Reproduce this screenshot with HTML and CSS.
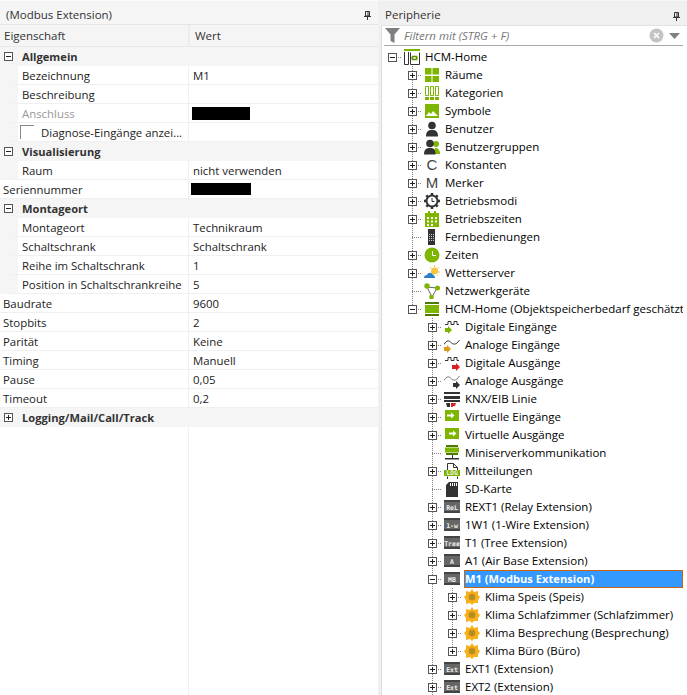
FILE: index.html
```html
<!DOCTYPE html>
<html lang="de">
<head>
<meta charset="utf-8">
<title>Modbus Extension</title>
<link rel="stylesheet" href="styles.css">
</head>
<body>
<svg class="defs" aria-hidden="true">
  <symbol id="i-root" viewBox="0 0 16 16"><rect x="0" y="0" width="16" height="2" fill="#7db500"/><path d="M.5 3v12.500h4V3M6.500 3.500v12h9v-12" fill="none" stroke="#333"/><rect x="8.500" y="7.500" width="4" height="3" fill="none" stroke="#5f9000" stroke-width="1.500"/><path d="M7 9h1M13 9h1" stroke="#5f9000"/></symbol>
  <symbol id="i-rooms" viewBox="0 0 16 16"><path d="M1 1h6.500v6.500H1zM8.500 1H15v6.500H8.500zM1 9h6.500v6H1zM8.500 9H15v6H8.500z" fill="#7db500"/></symbol>
  <symbol id="i-cat" viewBox="0 0 16 16"><path d="M1.500 1.500h3v9h-3zM6.500 1.500h3v9h-3zM11.500 1.500h3v9h-3z" fill="none" stroke="#7db500"/><path d="M1 12h4v3H1zM6 12h4v3H6zM11 12h4v3h-4z" fill="#7db500"/></symbol>
  <symbol id="i-sym" viewBox="0 0 16 16"><rect x="1" y="1" width="14" height="14" fill="#7db500"/><path d="M2 13l3-4 2 2 2-3 3 3 2 2z" fill="#fff"/></symbol>
  <symbol id="i-user" viewBox="0 0 16 16"><circle cx="8" cy="4.500" r="3.800" fill="#333"/><path d="M2 15.500c0-5 2-6.500 6-6.500s6 1.500 6 6.500z" fill="#333"/></symbol>
  <symbol id="i-group" viewBox="0 0 16 16"><circle cx="12" cy="5" r="3" fill="#7db500"/><path d="M9 15c1-5 2-6 3-6s4 1 4 6z" fill="#7db500"/><circle cx="6" cy="4.500" r="3.800" fill="#333"/><path d="M0 15.500c0-5 2-6.500 6-6.500s5.500 1.500 5.500 6.500z" fill="#333"/></symbol>
  <symbol id="i-gear" viewBox="0 0 16 16"><circle cx="8" cy="8" r="5.500" fill="none" stroke="#333" stroke-width="2"/><path d="M8 0v3M8 13v3M0 8h3M13 8h3M2.300 2.300l2 2M11.700 11.700l2 2M13.700 2.300l-2 2M4.300 11.700l-2 2" stroke="#333" stroke-width="2.500"/><path d="M8 5v3.500h2.500" fill="none" stroke="#333"/></symbol>
  <symbol id="i-cal" viewBox="0 0 16 16"><path d="M1 2h14v14H1z" fill="#7db500"/><path d="M4 0h2v3H4zM10 0h2v3h-2z" fill="#7db500"/><path d="M3 6h2v2H3zM7 6h2v2H7zM11 6h2v2h-2zM3 9.500h2v2H3zM7 9.500h2v2H7zM11 9.500h2v2h-2zM3 13h2v2H3zM7 13h2v2H7z" fill="#fff"/></symbol>
  <symbol id="i-remote" viewBox="0 0 16 16"><rect x="4" y="0" width="7" height="16" fill="#333"/><path d="M5 5h1v1H5zM7 5h1v1H7zM9 5h1v1H9zM5 7h1v1H5zM7 7h1v1H7zM9 7h1v1H9zM5 9h1v1H5zM7 9h1v1H7zM9 9h1v1H9zM5 11h1v1H5zM7 11h1v1H7zM9 11h1v1H9z" fill="#ccc"/></symbol>
  <symbol id="i-clock" viewBox="0 0 16 16"><circle cx="8" cy="8" r="7.500" fill="#7db500"/><path d="M8.500 4v4.500H12" fill="none" stroke="#fff"/></symbol>
  <symbol id="i-weather" viewBox="0 0 16 16"><circle cx="10.500" cy="6" r="3.500" fill="#f5c542"/><path d="M10.500 0v2M15 2l-1.500 1.500M16 7h-2M14 11l-1-1M6 2l1.500 1.500" stroke="#f5c542"/><path d="M0 13c0-2 1-3 3-3 1-3 5-3 6 0 1 0 2 1 2 3z" fill="#2a7fc8"/></symbol>
  <symbol id="i-net" viewBox="0 0 16 16"><path d="M3 4l10 1-5 9z" fill="none" stroke="#666"/><circle cx="3" cy="3" r="2.700" fill="#7db500"/><circle cx="13.500" cy="5" r="2.500" fill="#7db500"/><circle cx="7.500" cy="14" r="2.300" fill="#7db500"/></symbol>
  <symbol id="i-server" viewBox="0 0 16 16"><path d="M1 1h14v2H1z" fill="#4f7a00"/><path d="M1 4h14v8H1z" fill="#7db500"/><path d="M1 13h14v2H1z" fill="#4f7a00"/></symbol>
  <symbol id="i-di" viewBox="0 0 16 16"><path d="M1 5.500h3v-3h3v3h3v-3h3v3h2" fill="none" stroke="#333"/><path d="M1 9h3V7l4 4-4 4v-2H1z" fill="#7db500"/></symbol>
  <symbol id="i-ai" viewBox="0 0 16 16"><path d="M0 7.500C3 2.500 5 3.500 7 5.500s5 3 8.500-2.500" fill="none" stroke="#333"/><path d="M0 10h3V8l4 4-4 4v-2H0z" fill="#e09a1a"/></symbol>
  <symbol id="i-do" viewBox="0 0 16 16"><path d="M1 5.500h3v-3h3v3h3v-3h3v3h2" fill="none" stroke="#333"/><path d="M8 10h4V8l4 4-4 4v-2H8z" fill="#e02020"/></symbol>
  <symbol id="i-ao" viewBox="0 0 16 16"><path d="M0 7.500C3 2.500 5 3.500 7 5.500s5 3 8.500-2.500" fill="none" stroke="#777"/><path d="M9 10h3V8l4 4-4 4v-2H9z" fill="#333"/></symbol>
  <symbol id="i-knx" viewBox="0 0 16 16"><path d="M0 1h16v2H0zM0 5h16v3H0zM0 9h16v2H0z" fill="#333"/><path d="M2 12h4v4H3z" fill="#333"/><path d="M7 12h5l-1 3H9l-.500 2H7z" fill="#e02020"/></symbol>
  <symbol id="i-vi" viewBox="0 0 16 16"><rect x="1" y="1" width="14" height="11" fill="#7db500"/><path d="M3 5.500h4V3.500l3.500 3-3.500 3v-2H3z" fill="#fff"/></symbol>
  <symbol id="i-vo" viewBox="0 0 16 16"><rect x="1" y="1" width="14" height="11" fill="#7db500"/><path d="M5 5.500h4V3.500l3.500 3-3.500 3v-2H5z" fill="#fff"/></symbol>
  <symbol id="i-mini" viewBox="0 0 16 16"><path d="M2 0h12v2H2z" fill="#4f7a00"/><path d="M1 2.500h14v5H1z" fill="#7db500"/><path d="M2 8h12v2H2z" fill="#4f7a00"/><path d="M8 10h1v3H8zM1 13h14v1.500H1z" fill="#333"/></symbol>
  <symbol id="i-log" viewBox="0 0 16 16"><path d="M3.500.5h6l4 4v3M3.500.5v7M3.500 13.500v3h10v-3M9.500.5v4h4" fill="none" stroke="#333"/><rect x="0" y="7" width="16" height="6" fill="#7db500"/></symbol>
  <symbol id="i-sd" viewBox="0 0 16 16"><path d="M5 1h9v15H2V4z" fill="#333"/><path d="M6 2h1v3H6zM8 2h1v3H8zM10 2h1v3h-1zM12 2h1v3h-1z" fill="#fff"/></symbol>
  <symbol id="i-mod" viewBox="0 0 16 16"><path d="M0 1h16v2H0zM0 12h16v2H0z" fill="#444"/><rect x="0" y="3" width="16" height="9" fill="#666"/></symbol>
  <symbol id="i-klima" viewBox="0 0 16 16"><path d="M8 0l2 3 4-1 0 4 2 2-2 3 0 3-4 0-2 2-2-2-4 1 0-4-2-3 2-2 0-4 4 1z" fill="#f7b21b"/><circle cx="8" cy="8" r="3.500" fill="#d08a1e"/><path d="M6 6l4 4M10 6l-4 4" stroke="#7d9a20"/></symbol>
  <symbol id="i-pin" viewBox="0 0 9 9"><path d="M2.500.5h4v4.500h-4zM5 1v4M1 5.500h7M4.500 6v3" fill="none" stroke="#333"/></symbol>
</svg>

<main class="app">
  <section class="props">
    <header class="title"><span>(Modbus Extension)</span><svg class="pin"><use href="#i-pin"/></svg></header>
    <div class="phead"><span class="ph1">Eigenschaft</span><span class="ph2">Wert</span></div>

    <div class="grp"><span class="box minus"></span><b>Allgemein</b></div>
    <div class="row sub"><span class="n">Bezeichnung</span><span class="v">M1</span></div>
    <div class="row sub"><span class="n">Beschreibung</span><span class="v"></span></div>
    <div class="row sub"><span class="n off">Anschluss</span><span class="v"><i class="red r1"></i></span></div>
    <div class="row sub"><span class="n chk"><i class="cb"></i>Diagnose-Eingänge anzei...</span><span class="v"></span></div>
    <div class="grp"><span class="box minus"></span><b>Visualisierung</b></div>
    <div class="row sub"><span class="n">Raum</span><span class="v">nicht verwenden</span></div>
    <div class="row"><span class="n">Seriennummer</span><span class="v"><i class="red r2"></i></span></div>
    <div class="grp"><span class="box minus"></span><b>Montageort</b></div>
    <div class="row sub"><span class="n">Montageort</span><span class="v">Technikraum</span></div>
    <div class="row sub"><span class="n">Schaltschrank</span><span class="v">Schaltschrank</span></div>
    <div class="row sub"><span class="n">Reihe im Schaltschrank</span><span class="v">1</span></div>
    <div class="row sub"><span class="n">Position in Schaltschrankreihe</span><span class="v">5</span></div>
    <div class="row"><span class="n">Baudrate</span><span class="v">9600</span></div>
    <div class="row"><span class="n">Stopbits</span><span class="v">2</span></div>
    <div class="row"><span class="n">Parität</span><span class="v">Keine</span></div>
    <div class="row"><span class="n">Timing</span><span class="v">Manuell</span></div>
    <div class="row"><span class="n">Pause</span><span class="v">0,05</span></div>
    <div class="row"><span class="n">Timeout</span><span class="v">0,2</span></div>
    <div class="grp"><span class="box plus"></span><b>Logging/Mail/Call/Track</b></div>
    <div class="fill"></div>
  </section>

  <section class="peri">
    <header class="title"><span>Peripherie</span><svg class="pin"><use href="#i-pin"/></svg></header>
    <div class="body">
      <div class="filter">
        <svg class="funnel" viewBox="0 0 15 15"><path d="M0 0h15L9.500 6.500V15l-4-2V6.500z" fill="#808080"/></svg>
        <span class="ph">Filtern mit (STRG + F)</span>
        <svg class="clear" viewBox="0 0 15 15"><circle cx="7.500" cy="7.500" r="7" fill="#c4c4c4"/><path d="M5 5l5 5M10 5l-5 5" stroke="#fff" stroke-width="1.500"/></svg>
        <svg class="drop" viewBox="0 0 11 6"><path d="M0 0h11L5.500 6z" fill="#808080"/></svg>
      </div>
      <div class="tree">
        <div class="tr"><span class="c root"><span class="box minus"></span></span><svg class="ic"><use href="#i-root"/></svg><span class="lb">HCM-Home</span></div>

        <div class="tr"><span class="sp"></span><span class="c v"><span class="box plus"></span></span><svg class="ic"><use href="#i-rooms"/></svg><span class="lb">Räume</span></div>
        <div class="tr"><span class="sp"></span><span class="c v"><span class="box plus"></span></span><svg class="ic"><use href="#i-cat"/></svg><span class="lb">Kategorien</span></div>
        <div class="tr"><span class="sp"></span><span class="c v"><span class="box plus"></span></span><svg class="ic"><use href="#i-sym"/></svg><span class="lb">Symbole</span></div>
        <div class="tr"><span class="sp"></span><span class="c v"><span class="box plus"></span></span><svg class="ic"><use href="#i-user"/></svg><span class="lb">Benutzer</span></div>
        <div class="tr"><span class="sp"></span><span class="c v"><span class="box plus"></span></span><svg class="ic"><use href="#i-group"/></svg><span class="lb">Benutzergruppen</span></div>
        <div class="tr"><span class="sp"></span><span class="c v"><span class="box plus"></span></span><span class="ic gl">C</span><span class="lb">Konstanten</span></div>
        <div class="tr"><span class="sp"></span><span class="c v"><span class="box plus"></span></span><span class="ic gl">M</span><span class="lb">Merker</span></div>
        <div class="tr"><span class="sp"></span><span class="c v"><span class="box plus"></span></span><svg class="ic"><use href="#i-gear"/></svg><span class="lb">Betriebsmodi</span></div>
        <div class="tr"><span class="sp"></span><span class="c v"><span class="box plus"></span></span><svg class="ic"><use href="#i-cal"/></svg><span class="lb">Betriebszeiten</span></div>
        <div class="tr"><span class="sp"></span><span class="c v"></span><svg class="ic"><use href="#i-remote"/></svg><span class="lb">Fernbedienungen</span></div>
        <div class="tr"><span class="sp"></span><span class="c v"><span class="box plus"></span></span><svg class="ic"><use href="#i-clock"/></svg><span class="lb">Zeiten</span></div>
        <div class="tr"><span class="sp"></span><span class="c v"><span class="box plus"></span></span><svg class="ic"><use href="#i-weather"/></svg><span class="lb">Wetterserver</span></div>
        <div class="tr"><span class="sp"></span><span class="c v"></span><svg class="ic"><use href="#i-net"/></svg><span class="lb">Netzwerkgeräte</span></div>
        <div class="tr"><span class="sp"></span><span class="c last"><span class="box minus"></span></span><svg class="ic"><use href="#i-server"/></svg><span class="lb">HCM-Home (Objektspeicherbedarf geschätzt</span></div>

        <div class="tr"><span class="sp"></span><span class="sp"></span><span class="c v"><span class="box plus"></span></span><svg class="ic"><use href="#i-di"/></svg><span class="lb">Digitale Eingänge</span></div>
        <div class="tr"><span class="sp"></span><span class="sp"></span><span class="c v"><span class="box plus"></span></span><svg class="ic"><use href="#i-ai"/></svg><span class="lb">Analoge Eingänge</span></div>
        <div class="tr"><span class="sp"></span><span class="sp"></span><span class="c v"><span class="box plus"></span></span><svg class="ic"><use href="#i-do"/></svg><span class="lb">Digitale Ausgänge</span></div>
        <div class="tr"><span class="sp"></span><span class="sp"></span><span class="c v"><span class="box plus"></span></span><svg class="ic"><use href="#i-ao"/></svg><span class="lb">Analoge Ausgänge</span></div>
        <div class="tr"><span class="sp"></span><span class="sp"></span><span class="c v"><span class="box plus"></span></span><svg class="ic"><use href="#i-knx"/></svg><span class="lb">KNX/EIB Linie</span></div>
        <div class="tr"><span class="sp"></span><span class="sp"></span><span class="c v"><span class="box plus"></span></span><svg class="ic"><use href="#i-vi"/></svg><span class="lb">Virtuelle Eingänge</span></div>
        <div class="tr"><span class="sp"></span><span class="sp"></span><span class="c v"><span class="box plus"></span></span><svg class="ic"><use href="#i-vo"/></svg><span class="lb">Virtuelle Ausgänge</span></div>
        <div class="tr"><span class="sp"></span><span class="sp"></span><span class="c v"></span><svg class="ic"><use href="#i-mini"/></svg><span class="lb">Miniserverkommunikation</span></div>
        <div class="tr"><span class="sp"></span><span class="sp"></span><span class="c v"><span class="box plus"></span></span><svg class="ic" viewBox="0 0 16 16"><use href="#i-log" width="16" height="16"/><text x="8" y="12" class="ti">LOG</text></svg><span class="lb">Mitteilungen</span></div>
        <div class="tr"><span class="sp"></span><span class="sp"></span><span class="c v"></span><svg class="ic"><use href="#i-sd"/></svg><span class="lb">SD-Karte</span></div>
        <div class="tr"><span class="sp"></span><span class="sp"></span><span class="c v"><span class="box plus"></span></span><svg class="ic" viewBox="0 0 16 16"><use href="#i-mod" width="16" height="16"/><text x="8" y="10.500" class="ti">ReL</text></svg><span class="lb">REXT1 (Relay Extension)</span></div>
        <div class="tr"><span class="sp"></span><span class="sp"></span><span class="c v"><span class="box plus"></span></span><svg class="ic" viewBox="0 0 16 16"><use href="#i-mod" width="16" height="16"/><text x="8" y="10.500" class="ti">1-w</text></svg><span class="lb">1W1 (1-Wire Extension)</span></div>
        <div class="tr"><span class="sp"></span><span class="sp"></span><span class="c v"><span class="box plus"></span></span><svg class="ic" viewBox="0 0 16 16"><use href="#i-mod" width="16" height="16"/><text x="8" y="10.500" class="ti">Tree</text></svg><span class="lb">T1 (Tree Extension)</span></div>
        <div class="tr"><span class="sp"></span><span class="sp"></span><span class="c v"><span class="box plus"></span></span><svg class="ic" viewBox="0 0 16 16"><use href="#i-mod" width="16" height="16"/><text x="8" y="10.500" class="ti">A</text></svg><span class="lb">A1 (Air Base Extension)</span></div>
        <div class="tr"><span class="sp"></span><span class="sp"></span><span class="c v"><span class="box minus"></span></span><svg class="ic" viewBox="0 0 16 16"><use href="#i-mod" width="16" height="16"/><text x="8" y="10.500" class="ti">MB</text></svg><span class="lb sel">M1 (Modbus Extension)</span></div>

        <div class="tr"><span class="sp"></span><span class="sp"></span><span class="g"></span><span class="c v"><span class="box plus"></span></span><svg class="ic"><use href="#i-klima"/></svg><span class="lb">Klima Speis (Speis)</span></div>
        <div class="tr"><span class="sp"></span><span class="sp"></span><span class="g"></span><span class="c v"><span class="box plus"></span></span><svg class="ic"><use href="#i-klima"/></svg><span class="lb">Klima Schlafzimmer (Schlafzimmer)</span></div>
        <div class="tr"><span class="sp"></span><span class="sp"></span><span class="g"></span><span class="c v"><span class="box plus"></span></span><svg class="ic"><use href="#i-klima"/></svg><span class="lb">Klima Besprechung (Besprechung)</span></div>
        <div class="tr"><span class="sp"></span><span class="sp"></span><span class="g"></span><span class="c last"><span class="box plus"></span></span><svg class="ic"><use href="#i-klima"/></svg><span class="lb">Klima Büro (Büro)</span></div>

        <div class="tr"><span class="sp"></span><span class="sp"></span><span class="c v"><span class="box plus"></span></span><svg class="ic" viewBox="0 0 16 16"><use href="#i-mod" width="16" height="16"/><text x="8" y="10.500" class="ti">Ext</text></svg><span class="lb">EXT1 (Extension)</span></div>
        <div class="tr"><span class="sp"></span><span class="sp"></span><span class="c v"><span class="box plus"></span></span><svg class="ic" viewBox="0 0 16 16"><use href="#i-mod" width="16" height="16"/><text x="8" y="10.500" class="ti">Ext</text></svg><span class="lb">EXT2 (Extension)</span></div>
      </div>
    </div>
  </section>
</main>
</body>
</html>
```

FILE: styles.css
```css
* { box-sizing: border-box; }
html, body { margin: 0; height: 695px; overflow: hidden; }
body {
  background: #f0f0f0;
  color: #000;
  font-family: "Open Sans", "Noto Sans", sans-serif;
  font-size: 11.5px;
}
.defs { position: absolute; width: 0; height: 0; }
.ti { font: 700 6.5px "DejaVu Sans Mono", monospace; fill: #eee; text-anchor: middle; }

.app { display: flex; height: 695px; }

.title {
  height: 25px;
  display: flex;
  align-items: center;
  justify-content: space-between;
  padding: 5px 6px 0 6px;
  background: #f5f5f5;
  border-top: 1px solid #fbfbfb;
  color: #333;
  line-height: 18px;
  flex: none;
}
.pin { width: 9px; height: 9px; flex: none; margin-top: 0; }

.props { width: 378px; display: flex; flex-direction: column; background: #fff; flex: none; }
.props .title { border-bottom: 1px solid #e4e4e4; }
.phead {
  height: 22px;
  display: grid;
  grid-template-columns: 190px 1fr;
  align-items: center;
  background: #f5f5f5;
  border-bottom: 1px solid #e8e8e8;
  color: #333;
  flex: none;
}
.ph1 { padding-left: 4px; height: 100%; line-height: 21px; border-right: 2px solid #ececec; }
.ph2 { padding-left: 5px; }

.grp {
  height: 19px;
  display: flex;
  align-items: center;
  background: #f5f5f5;
  padding-left: 4px;
  flex: none;
  color: #333;
}
.grp b { margin-left: 9px; font-weight: 700; font-size: 11.15px; }

.row {
  height: 19px;
  display: grid;
  grid-template-columns: 189px 1fr;
  background: #fff;
  border-bottom: 1px solid #f0f0f0;
  line-height: 18px;
  flex: none;
  color: #222;
  font-size: 11.4px;
}
.row.sub { border-left: 18px solid #f5f5f5; grid-template-columns: 171px 1fr; }
.n { padding: 1px 0 0 3px; border-right: 1px solid #f0f0f0; white-space: nowrap; overflow: hidden; }
.row.sub .n { padding-left: 4px; }
.v { padding: 1px 0 0 4px; }
.off { color: #999; }
.chk { position: relative; padding-left: 23px !important; }
.cb { position: absolute; left: 2px; top: 2px; width: 14px; height: 14px; border-left: 1px solid #888; border-top: 1px solid #888; }
.red { display: block; background: #000; margin-top: 2px; }
.r1 { width: 58px; height: 13px; margin-left: -1px; }
.r2 { width: 60px; height: 12px; margin-left: -2px; }
.fill {
  flex: 1;
  background: linear-gradient(#f0f0f0, #f0f0f0) 188px 0 / 1px 100% no-repeat #fff;
}

.peri { flex: 1; min-width: 0; margin-left: 3px; display: flex; flex-direction: column; }
.peri .title { padding: 4px 6px 0 4px; background: #f0f0f0; border-top-color: #f7f7f7; }
.peri .pin { margin-top: 2px; }
.body { flex: 1; background: #fff; border-left: 1px solid #dcdcdc; border-top: 1px solid #e4e4e4; padding-right: 4px; display: flex; flex-direction: column; min-height: 0; }
.filter {
  height: 20px;
  margin: 0 0 0 2px;
  padding-left: 1px;
  flex: none;
  display: flex;
  align-items: center;
  border-bottom: 1px solid #a8a8a8;
}
.funnel { width: 15px; height: 15px; flex: none; }
.ph { font-style: italic; color: #777; margin-left: 4px; flex: 1; }
.clear { width: 15px; height: 15px; flex: none; }
.drop { width: 11px; height: 6px; margin: 0 3px 0 5px; flex: none; }

.tree { flex: 1; overflow: hidden; padding-top: 2px; }
.tr { height: 18px; display: flex; align-items: center; white-space: nowrap; }
.sp { width: 20px; height: 18px; flex: none; }
.c, .g { width: 20px; height: 18px; flex: none; position: relative; background-repeat: no-repeat; }
.c {
  background-image: repeating-linear-gradient(to right, #808080 0 1px, transparent 1px 2px);
  background-position: 10px 9px;
  background-size: 10px 1px;
}
.c.v {
  background-image:
    repeating-linear-gradient(#808080 0 1px, transparent 1px 2px),
    repeating-linear-gradient(to right, #808080 0 1px, transparent 1px 2px);
  background-position: 10px 0, 10px 9px;
  background-size: 1px 18px, 10px 1px;
}
.g { background-image: repeating-linear-gradient(#808080 0 1px, transparent 1px 2px); background-position: 10px 0; background-size: 1px 18px; }
.c.last {
  background-image:
    repeating-linear-gradient(#808080 0 1px, transparent 1px 2px),
    repeating-linear-gradient(to right, #808080 0 1px, transparent 1px 2px);
  background-position: 10px 0, 10px 9px;
  background-size: 1px 9px, 10px 1px;
}

.box {
  display: block;
  width: 9px;
  height: 9px;
  flex: none;
  border: 1px solid #555;
  background-color: #fff;
  background-repeat: no-repeat;
  background-image: linear-gradient(#222, #222), linear-gradient(#222, #222);
  background-position: 1px 3px, 3px 1px;
  background-size: 5px 1px, 1px 5px;
}
.box.minus { background-size: 5px 1px, 0 0; }
.c .box { position: absolute; left: 6px; top: 5px; }

.ic { width: 16px; height: 16px; margin-left: 2px; flex: none; overflow: visible; }
.gl { display: block; text-align: center; font-size: 15px; line-height: 16px; color: #444; font-family: "Liberation Sans", sans-serif; }
.lb { margin-left: 4px; padding: 0 1px; line-height: 18px; height: 18px; }
.lb.sel {
  flex: 1;
  padding: 0;
  background: #3399ff;
  border: 1px solid #c8640f;
  color: #fff;
  font-weight: 700;
  font-size: 11.15px;
  line-height: 16px;
}
```
